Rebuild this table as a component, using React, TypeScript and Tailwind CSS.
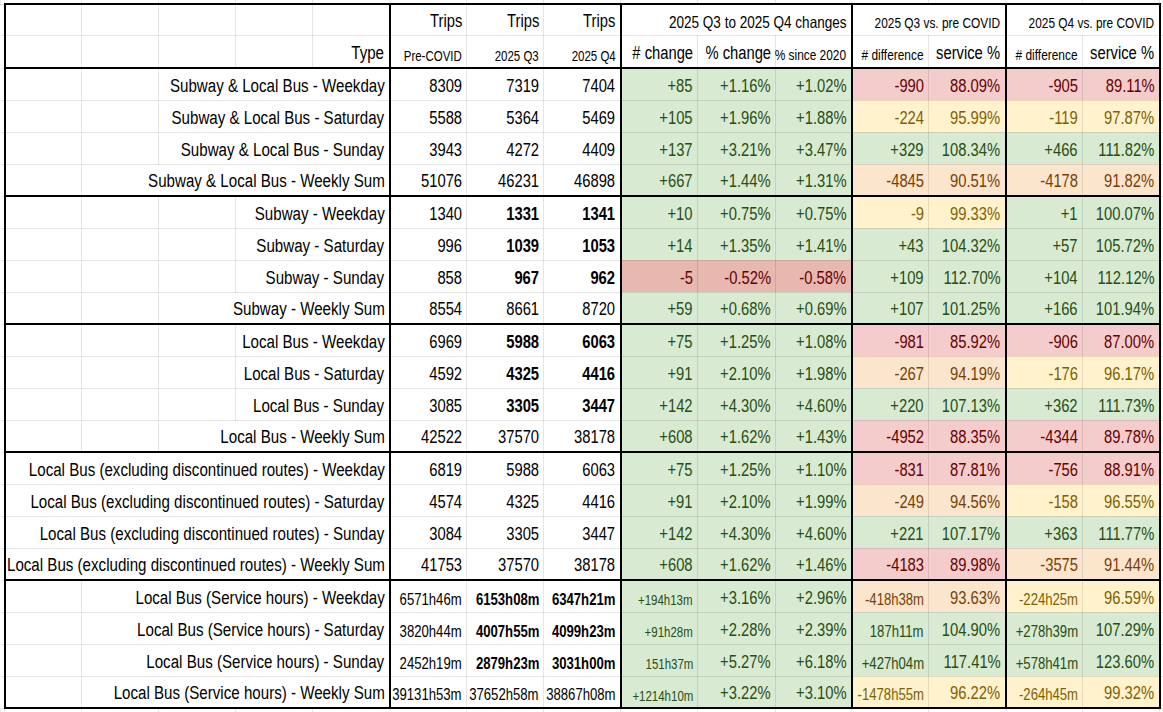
import React from 'react'

type Row = {
    label: string
    span: number
    v: string[]
    bold?: boolean
    svc?: boolean
    redChange?: boolean
}

const rows: Row[] = [
    { label: 'Subway & Local Bus - Weekday', span: 3, v: ['8309', '7319', '7404', '+85', '+1.16%', '+1.02%', '-990', '88.09%', '-905', '89.11%'] },
    { label: 'Subway & Local Bus - Saturday', span: 3, v: ['5588', '5364', '5469', '+105', '+1.96%', '+1.88%', '-224', '95.99%', '-119', '97.87%'] },
    { label: 'Subway & Local Bus - Sunday', span: 3, v: ['3943', '4272', '4409', '+137', '+3.21%', '+3.47%', '+329', '108.34%', '+466', '111.82%'] },
    { label: 'Subway & Local Bus - Weekly Sum', span: 4, v: ['51076', '46231', '46898', '+667', '+1.44%', '+1.31%', '-4845', '90.51%', '-4178', '91.82%'] },
    { label: 'Subway - Weekday', span: 2, bold: true, v: ['1340', '1331', '1341', '+10', '+0.75%', '+0.75%', '-9', '99.33%', '+1', '100.07%'] },
    { label: 'Subway - Saturday', span: 2, bold: true, v: ['996', '1039', '1053', '+14', '+1.35%', '+1.41%', '+43', '104.32%', '+57', '105.72%'] },
    { label: 'Subway - Sunday', span: 2, bold: true, redChange: true, v: ['858', '967', '962', '-5', '-0.52%', '-0.58%', '+109', '112.70%', '+104', '112.12%'] },
    { label: 'Subway - Weekly Sum', span: 3, v: ['8554', '8661', '8720', '+59', '+0.68%', '+0.69%', '+107', '101.25%', '+166', '101.94%'] },
    { label: 'Local Bus - Weekday', span: 2, bold: true, v: ['6969', '5988', '6063', '+75', '+1.25%', '+1.08%', '-981', '85.92%', '-906', '87.00%'] },
    { label: 'Local Bus - Saturday', span: 2, bold: true, v: ['4592', '4325', '4416', '+91', '+2.10%', '+1.98%', '-267', '94.19%', '-176', '96.17%'] },
    { label: 'Local Bus - Sunday', span: 2, bold: true, v: ['3085', '3305', '3447', '+142', '+4.30%', '+4.60%', '+220', '107.13%', '+362', '111.73%'] },
    { label: 'Local Bus - Weekly Sum', span: 3, v: ['42522', '37570', '38178', '+608', '+1.62%', '+1.43%', '-4952', '88.35%', '-4344', '89.78%'] },
    { label: 'Local Bus (excluding discontinued routes) - Weekday', span: 5, v: ['6819', '5988', '6063', '+75', '+1.25%', '+1.10%', '-831', '87.81%', '-756', '88.91%'] },
    { label: 'Local Bus (excluding discontinued routes) - Saturday', span: 5, v: ['4574', '4325', '4416', '+91', '+2.10%', '+1.99%', '-249', '94.56%', '-158', '96.55%'] },
    { label: 'Local Bus (excluding discontinued routes) - Sunday', span: 5, v: ['3084', '3305', '3447', '+142', '+4.30%', '+4.60%', '+221', '107.17%', '+363', '111.77%'] },
    { label: 'Local Bus (excluding discontinued routes) - Weekly Sum', span: 5, v: ['41753', '37570', '38178', '+608', '+1.62%', '+1.46%', '-4183', '89.98%', '-3575', '91.44%'] },
    { label: 'Local Bus (Service hours) - Weekday', span: 4, svc: true, bold: true, v: ['6571h46m', '6153h08m', '6347h21m', '+194h13m', '+3.16%', '+2.96%', '-418h38m', '93.63%', '-224h25m', '96.59%'] },
    { label: 'Local Bus (Service hours) - Saturday', span: 4, svc: true, bold: true, v: ['3820h44m', '4007h55m', '4099h23m', '+91h28m', '+2.28%', '+2.39%', '187h11m', '104.90%', '+278h39m', '107.29%'] },
    { label: 'Local Bus (Service hours) - Sunday', span: 4, svc: true, bold: true, v: ['2452h19m', '2879h23m', '3031h00m', '151h37m', '+5.27%', '+6.18%', '+427h04m', '117.41%', '+578h41m', '123.60%'] },
    { label: 'Local Bus (Service hours) - Weekly Sum', span: 4, svc: true, v: ['39131h53m', '37652h58m', '38867h08m', '+1214h10m', '+3.22%', '+3.10%', '-1478h55m', '96.22%', '-264h45m', '99.32%'] },
]

const GREEN = 'bg-[#d9ead3] text-[#274e13]'
const RED = 'bg-[#f4cccc] text-[#660000]'
const RED_DARK = 'bg-[#e6b8af] text-[#660000]'
const ORANGE = 'bg-[#fce5cd] text-[#783f04]'
const YELLOW = 'bg-[#fff2cc] text-[#7f6000]'

function serviceColor(pct: string) {
    const n = parseFloat(pct)
    if (n < 90) return RED
    if (n < 95) return ORANGE
    if (n < 100) return YELLOW
    return GREEN
}

const cell = 'border border-black/10 p-0 pr-[4px] pb-[3px] align-bottom text-right whitespace-nowrap leading-[1.1]'
const thickL = 'border-l-2 border-l-black'
const thickB = 'border-b-2 border-b-black'
const thickT = 'border-t-2 border-t-black'
const thickR = 'border-r-2 border-r-black'

// spreadsheet narrow font: Liberation Sans squeezed to Arial Narrow proportions
function Txt({ children, wide }: { children?: React.ReactNode; wide?: boolean }) {
    return (
        <div className="flex justify-end">
            <span className={`shrink-0 whitespace-nowrap origin-right ${wide ? 'scale-x-[0.84]' : 'scale-x-[0.82]'}`}>
                {children}
            </span>
        </div>
    )
}

function valueClass(row: Row, i: number) {
    const parts: string[] = [cell]
    if (i === 0 || i === 3 || i === 6 || i === 8) parts.push(thickL)
    if (i === 9) parts.push(thickR)
    if (i >= 3 && i <= 5) parts.push(row.redChange ? RED_DARK : GREEN)
    else if (i === 6 || i === 7) parts.push(serviceColor(row.v[7]))
    else if (i === 8 || i === 9) parts.push(serviceColor(row.v[9]))

    if (row.svc && (i <= 2 || i === 6 || i === 8)) parts.push('text-[16px]')
    else if (row.svc && i === 3) parts.push('text-[14px]')
    else parts.push('text-[18px]')

    if (row.bold && (i === 1 || i === 2)) parts.push('font-bold')
    return parts.join(' ')
}

const edge = 'border border-black/10 p-0'

export default function App() {
    const widths = [4, 77, 77, 77, 77, 77, 77, 77, 77, 77, 78, 76, 77, 77, 77, 77, 4]
    const h1 = 'pb-[1px]'
    return (
        <div className="w-[1163px] h-[712px] overflow-hidden bg-white text-black font-['Liberation_Sans',Arial,sans-serif]">
            <table className="border-collapse table-fixed w-[1163px]">
                <colgroup>
                    {widths.map((w, i) => (
                        <col key={i} style={{ width: w }} />
                    ))}
                </colgroup>
                <tbody>
                    <tr className="h-[4px]">
                        {widths.map((_, i) => (
                            <td key={i} className={`${edge} border-t-0`} />
                        ))}
                    </tr>
                    {/* header row 1 */}
                    <tr className="h-[31px]">
                        <td className={`${edge} border-l-0`} />
                        <td className={`${cell} ${thickL} ${thickT}`} />
                        <td className={`${cell} ${thickT}`} />
                        <td className={`${cell} ${thickT}`} />
                        <td className={`${cell} ${thickT}`} />
                        <td className={`${cell} ${thickT}`} />
                        <td className={`${cell} ${h1} ${thickT} ${thickL} text-[18px]`}><Txt>Trips</Txt></td>
                        <td className={`${cell} ${h1} ${thickT} text-[18px]`}><Txt>Trips</Txt></td>
                        <td className={`${cell} ${h1} ${thickT} text-[18px]`}><Txt>Trips</Txt></td>
                        <td colSpan={3} className={`${cell} ${h1} ${thickT} ${thickL} text-[16.5px]`}><Txt>2025 Q3 to 2025 Q4 changes</Txt></td>
                        <td colSpan={2} className={`${cell} ${h1} ${thickT} ${thickL} text-[14.5px]`}><Txt>2025 Q3 vs. pre COVID</Txt></td>
                        <td colSpan={2} className={`${cell} ${h1} ${thickT} ${thickL} ${thickR} text-[14.5px]`}><Txt>2025 Q4 vs. pre COVID</Txt></td>
                        <td className={`${edge} border-r-0`} />
                    </tr>
                    {/* header row 2 */}
                    <tr className="h-[33px]">
                        <td className={`${edge} border-l-0`} />
                        <td className={`${cell} ${thickL} ${thickB}`} />
                        <td className={`${cell} ${thickB}`} />
                        <td className={`${cell} ${thickB}`} />
                        <td className={`${cell} ${thickB}`} />
                        <td className={`${cell} ${thickB} text-[18px]`}><Txt wide>Type</Txt></td>
                        <td className={`${cell} ${thickB} ${thickL} text-[14px]`}><Txt>Pre-COVID</Txt></td>
                        <td className={`${cell} ${thickB} text-[14px]`}><Txt>2025 Q3</Txt></td>
                        <td className={`${cell} ${thickB} text-[14px]`}><Txt>2025 Q4</Txt></td>
                        <td className={`${cell} ${thickB} ${thickL} text-[18px]`}><Txt># change</Txt></td>
                        <td className={`${cell} ${thickB} text-[18px]`}><Txt>% change</Txt></td>
                        <td className={`${cell} ${thickB} text-[14.5px]`}><Txt>% since 2020</Txt></td>
                        <td className={`${cell} ${thickB} ${thickL} text-[14.5px]`}><Txt># difference</Txt></td>
                        <td className={`${cell} ${thickB} text-[18px]`}><Txt>service %</Txt></td>
                        <td className={`${cell} ${thickB} ${thickL} text-[14.5px]`}><Txt># difference</Txt></td>
                        <td className={`${cell} ${thickB} ${thickR} text-[18px]`}><Txt>service %</Txt></td>
                        <td className={`${edge} border-r-0`} />
                    </tr>
                    {rows.map((row, r) => {
                        const groupEnd = r % 4 === 3
                        const b = groupEnd ? thickB : ''
                        const blanks = 5 - row.span
                        return (
                            <tr key={r} className="h-[32px]">
                                <td className={`${edge} border-l-0`} />
                                {Array.from({ length: blanks }).map((_, k) => (
                                    <td key={k} className={`${cell} ${b} ${k === 0 ? thickL : ''}`} />
                                ))}
                                <td colSpan={row.span} className={`${cell} ${b} ${blanks === 0 ? thickL : ''} text-[18px]`}>
                                    <Txt wide>{row.label}</Txt>
                                </td>
                                {row.v.map((val, i) => (
                                    <td key={i} className={`${valueClass(row, i)} ${b}`}>
                                        <Txt>{val}</Txt>
                                    </td>
                                ))}
                                <td className={`${edge} border-r-0`} />
                            </tr>
                        )
                    })}
                    <tr className="h-[4px]">
                        {widths.map((_, i) => (
                            <td key={i} className={`${edge} border-b-0`} />
                        ))}
                    </tr>
                </tbody>
            </table>
        </div>
    )
}
